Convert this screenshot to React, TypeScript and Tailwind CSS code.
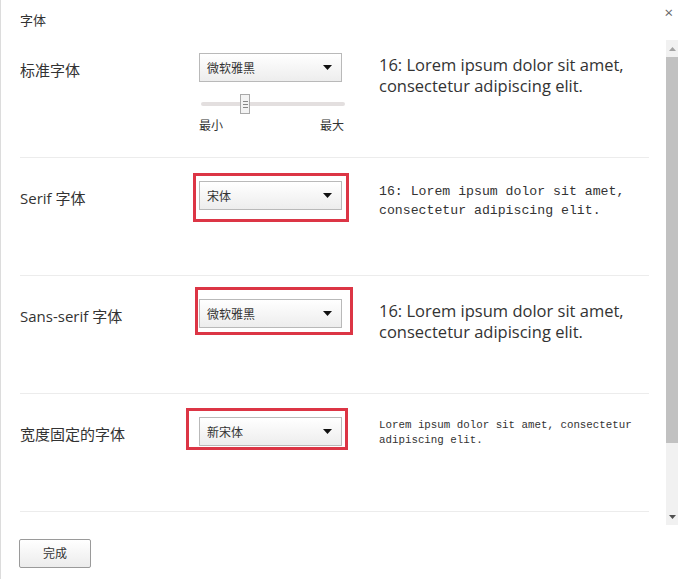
import type { ReactNode } from 'react';

const cjk = "font-['Open_Sans','Noto_Sans_CJK_SC',sans-serif]";

// 下拉框
const FontSelect = ({ value }: { value: string }) => (
  <div className="flex h-[29px] w-[143px] items-center justify-between border border-[#b9b9b9] bg-gradient-to-b from-white to-[#ededed] pl-[7px] pr-[9px] text-[12px] text-[#333]">
    <span className="font-['Noto_Sans_CJK_SC',sans-serif]">{value}</span>
    <svg width="9" height="5" viewBox="0 0 9 5">
      <path d="M0 0h9L4.5 5z" fill="#111" />
    </svg>
  </div>
);

// 红色标注框
const Mark = ({ className }: { className: string }) => (
  <div className={`pointer-events-none absolute border-[3px] border-[#dc3545] ${className}`} />
);

const Row = ({
  label,
  control,
  sample,
  first,
}: {
  label: string;
  control: ReactNode;
  sample: ReactNode;
  first?: boolean;
}) => (
  <div
    className={`flex h-[118px] border-b border-[#ececec] ${first ? 'pt-[13px]' : 'pt-[23px]'}`}
  >
    <div className="w-[179px] pt-[7px] text-[15px] leading-[20px] text-[#333]">{label}</div>
    <div className="w-[180px]">{control}</div>
    <div className="flex-1 pt-[1px] text-[#333]">{sample}</div>
  </div>
);

const Slider = () => (
  <div className="mt-[12px] w-[147px]">
    <div className="relative ml-[2px] h-[20px] w-[144px]">
      <div className="absolute left-0 right-0 top-[8px] h-[4px] rounded-full bg-[#e3dfdf]" />
      <div className="absolute left-[39px] top-0 flex h-[20px] w-[10px] flex-col items-center justify-center gap-[2px] border border-[#a9a9a9] bg-[#f3f3f3]">
        <span className="h-px w-[5px] bg-[#888]" />
        <span className="h-px w-[5px] bg-[#888]" />
        <span className="h-px w-[5px] bg-[#888]" />
      </div>
    </div>
    <div className="mt-[3px] flex justify-between text-[12px] leading-[18px] text-[#333]">
      <span>最小</span>
      <span className="mr-[2px]">最大</span>
    </div>
  </div>
);

export default function App() {
  return (
    <div className={`relative flex h-[579px] w-[678px] flex-col overflow-hidden border-l border-[#dcdcdc] bg-white ${cjk}`}>
      {/* 标题栏 */}
      <div className="flex h-[40px] items-start justify-between">
        <div className="pl-[19px] pt-[10px] text-[13px] leading-[20px] text-[#333]">字体</div>
        <div className="pr-[5px] pt-[2px] text-[15px] leading-[20px] text-[#666]">×</div>
      </div>

      <div className="flex h-[485px]">
        <div className="w-[665px] pl-[19px] pr-[17px]">
          <Row
            first
            label="标准字体"
            control={
              <div>
                <FontSelect value="微软雅黑" />
                <Slider />
              </div>
            }
            sample={
              <p className="text-[16.5px] leading-[21px]">
                16: Lorem ipsum dolor sit amet,
                <br />
                consectetur adipiscing elit.
              </p>
            }
          />
          <Row
            label="Serif 字体"
            control={
              <div className="relative w-[143px]">
                <FontSelect value="宋体" />
                <Mark className="-left-[6px] -right-[7px] -top-[8px] -bottom-[12px]" />
              </div>
            }
            sample={
              <p className="font-['Liberation_Mono',monospace] text-[13.2px] leading-[19px]">
                16: Lorem ipsum dolor sit amet,
                <br />
                consectetur adipiscing elit.
              </p>
            }
          />
          <Row
            label="Sans-serif 字体"
            control={
              <div className="relative w-[143px]">
                <FontSelect value="微软雅黑" />
                <Mark className="-left-[4px] -right-[11px] -top-[12px] -bottom-[7px]" />
              </div>
            }
            sample={
              <p className="text-[16.5px] leading-[21px]">
                16: Lorem ipsum dolor sit amet,
                <br />
                consectetur adipiscing elit.
              </p>
            }
          />
          <Row
            label="宽度固定的字体"
            control={
              <div className="relative w-[143px]">
                <FontSelect value="新宋体" />
                <Mark className="-left-[13px] -right-[6px] -top-[9px] -bottom-[4px]" />
              </div>
            }
            sample={
              <p className="font-['Liberation_Mono',monospace] text-[10.8px] leading-[15px]">
                Lorem ipsum dolor sit amet, consectetur
                <br />
                adipiscing elit.
              </p>
            }
          />
        </div>

        {/* 滚动条 */}
        <div className="flex w-[12px] flex-col bg-[#f1f1f1]">
          <div className="flex h-[17px] items-center justify-center">
            <svg width="7" height="4" viewBox="0 0 7 4">
              <path d="M0 4h7L3.5 0z" fill="#a3a3a3" />
            </svg>
          </div>
          <div className="h-[386px] bg-[#c1c1c1]" />
          <div className="flex-1" />
          <div className="flex h-[17px] items-center justify-center">
            <svg width="7" height="4" viewBox="0 0 7 4">
              <path d="M0 0h7L3.5 4z" fill="#505050" />
            </svg>
          </div>
        </div>
      </div>

      {/* 底部按钮 */}
      <div className="pl-[18px] pt-[14px]">
        <button className="h-[29px] w-[72px] rounded-[2px] border border-[#9a9a9a] bg-gradient-to-b from-white to-[#ececec] text-[12px] text-[#333]">
          完成
        </button>
      </div>
    </div>
  );
}
